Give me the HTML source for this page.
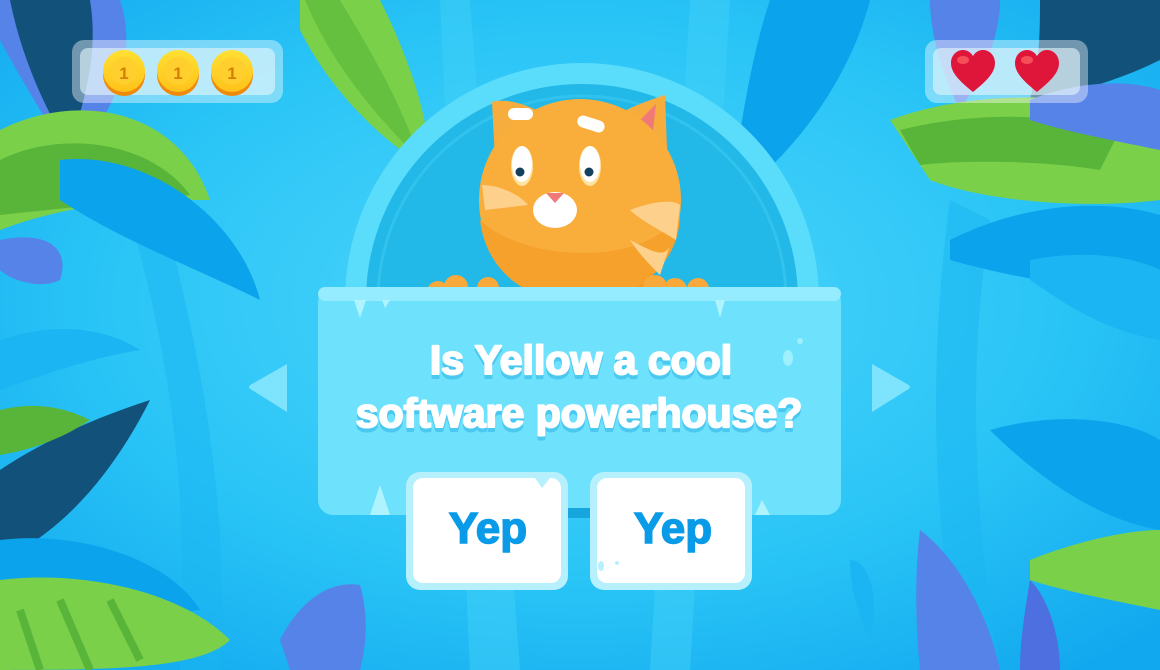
<!DOCTYPE html>
<html><head><meta charset="utf-8"><style>
html,body{margin:0;padding:0;width:1160px;height:670px;overflow:hidden;background:#27c6f5}
svg{display:block}
text{font-family:"Liberation Sans",sans-serif;font-weight:bold}
</style></head><body>
<svg width="1160" height="670" viewBox="0 0 1160 670" xmlns="http://www.w3.org/2000/svg">
<defs>
<radialGradient id="bg" cx="0.5" cy="0.45" r="0.7">
<stop offset="0" stop-color="#4fd6fb"/><stop offset="0.6" stop-color="#29c4f6"/><stop offset="1" stop-color="#12a8ef"/>
</radialGradient>
<linearGradient id="coin" x1="0" y1="0" x2="0" y2="1"><stop offset="0" stop-color="#ffe033"/><stop offset="1" stop-color="#ffc21a"/></linearGradient>
</defs>
<rect width="1160" height="670" fill="url(#bg)"/>
<path d="M440 0 L470 0 L520 670 L470 670Z" fill="#3fd0f8" opacity=".5"/>
<path d="M690 0 L730 0 L690 670 L650 670Z" fill="#3fd0f8" opacity=".5"/>
<path d="M160 200 C200 350 230 500 220 670 L180 670 C190 500 170 350 130 220Z" fill="#1ab5f2" opacity=".5"/>
<path d="M950 200 C930 350 930 500 960 670 L1000 670 C970 500 970 350 990 220Z" fill="#1ab5f2" opacity=".5"/>
<!-- leaves left -->
<path d="M0 0 L120 0 C140 60 110 120 70 160 C40 110 10 60 0 40Z" fill="#5583e8"/>
<path d="M10 0 L90 0 C100 60 80 110 70 150 C40 100 20 50 10 0Z" fill="#12527a"/>
<path d="M0 130 C80 90 180 110 210 200 C150 200 80 200 0 230Z" fill="#7bd04a"/>
<path d="M0 160 C60 130 150 140 190 195 L0 215Z" fill="#58b53a"/>
<path d="M60 160 C150 150 240 220 260 300 C200 270 120 240 60 200Z" fill="#0ba3ec"/>
<path d="M0 240 C50 230 70 250 60 280 C40 290 10 280 0 270Z" fill="#5583e8"/>
<path d="M0 340 C60 320 110 330 140 350 C80 360 30 380 0 390Z" fill="#1ab5f2"/>
<path d="M0 470 C60 430 120 410 150 400 C120 460 70 530 0 560Z" fill="#12527a"/>
<path d="M0 410 C40 400 70 410 90 420 C60 440 30 450 0 455Z" fill="#58b53a"/>
<path d="M0 540 C80 530 170 560 200 610 C130 620 60 620 0 615Z" fill="#0ba3ec"/>
<path d="M0 580 C80 570 180 590 230 640 C200 670 100 670 0 670Z" fill="#7bd04a"/>
<path d="M20 610 L40 670 M60 600 L90 670 M110 600 L140 660" stroke="#58b53a" stroke-width="8"/>
<path d="M300 0 L380 0 C410 60 430 120 430 170 C380 140 330 90 300 30Z" fill="#7bd04a"/>
<path d="M305 0 L340 0 C370 50 400 100 420 160 C370 110 330 60 305 0Z" fill="#58b53a" opacity=".6"/>
<path d="M280 640 C300 600 330 580 360 585 C370 620 365 650 360 670 L290 670Z" fill="#5583e8"/>
<!-- leaves right -->
<path d="M770 0 L870 0 C850 80 790 160 730 200 C740 130 750 60 770 0Z" fill="#0ba3ec"/>
<path d="M930 0 L1000 0 C1000 40 980 80 960 110 C940 70 930 30 930 0Z" fill="#5583e8"/>
<path d="M1040 0 L1160 0 L1160 60 C1120 80 1070 95 1030 100 C1040 60 1040 30 1040 0Z" fill="#12527a"/>
<path d="M890 120 C970 90 1080 90 1160 120 L1160 200 C1080 210 980 200 930 180Z" fill="#7bd04a"/>
<path d="M900 130 C980 110 1060 115 1120 130 L1100 170 C1040 160 960 160 920 165Z" fill="#58b53a"/>
<path d="M1030 100 C1080 80 1130 80 1160 90 L1160 150 C1110 140 1060 130 1030 120Z" fill="#5583e8"/>
<path d="M950 240 C1030 200 1110 200 1160 215 L1160 300 C1100 290 1020 280 950 260Z" fill="#0ba3ec"/>
<path d="M1030 260 C1080 250 1130 255 1160 270 L1160 340 C1100 330 1060 300 1030 280Z" fill="#1ab5f2"/>
<path d="M990 430 C1060 410 1130 420 1160 440 L1160 530 C1100 520 1040 480 990 430Z" fill="#0ba3ec"/>
<path d="M1030 560 C1080 540 1130 530 1160 530 L1160 610 C1110 600 1060 590 1030 580Z" fill="#7bd04a"/>
<path d="M920 530 C960 560 990 620 1000 670 L920 670 C915 620 915 570 920 530Z" fill="#5583e8"/>
<path d="M1030 580 C1050 600 1060 640 1060 670 L1020 670 C1020 640 1025 610 1030 580Z" fill="#4d6fe0"/>
<path d="M850 560 C870 560 880 600 870 640 C860 620 850 590 850 560Z" fill="#1ab5f2"/>
<!-- HUD panels -->
<rect x="72" y="40" width="211" height="63" rx="12" fill="#ffffff" opacity=".4"/>
<rect x="80" y="48" width="195" height="47" rx="8" fill="#e4f6fc" opacity=".6"/>
<g>
<circle cx="124" cy="75" r="21" fill="#f08a0a"/><circle cx="124" cy="71" r="21" fill="url(#coin)"/><circle cx="124" cy="71" r="14" fill="#ffcf2e"/><text x="124" y="79" font-size="17" fill="#d67f08" text-anchor="middle">1</text>
<circle cx="178" cy="75" r="21" fill="#f08a0a"/><circle cx="178" cy="71" r="21" fill="url(#coin)"/><circle cx="178" cy="71" r="14" fill="#ffcf2e"/><text x="178" y="79" font-size="17" fill="#d67f08" text-anchor="middle">1</text>
<circle cx="232" cy="75" r="21" fill="#f08a0a"/><circle cx="232" cy="71" r="21" fill="url(#coin)"/><circle cx="232" cy="71" r="14" fill="#ffcf2e"/><text x="232" y="79" font-size="17" fill="#d67f08" text-anchor="middle">1</text>
</g>
<rect x="925" y="40" width="163" height="63" rx="12" fill="#ffffff" opacity=".4"/>
<rect x="933" y="48" width="147" height="47" rx="8" fill="#e4f6fc" opacity=".6"/>
<path d="M973 92 C958 80 951 72 951 63 C951 55 957 50 963 50 C968 50 971 53 973 56 C975 53 978 50 983 50 C989 50 995 55 995 63 C995 72 988 80 973 92Z" fill="#e0153a"/>
<path d="M1037 92 C1022 80 1015 72 1015 63 C1015 55 1021 50 1027 50 C1032 50 1035 53 1037 56 C1039 53 1042 50 1047 50 C1053 50 1059 55 1059 63 C1059 72 1052 80 1037 92Z" fill="#e0153a"/>
<ellipse cx="963" cy="60" rx="6" ry="4" fill="#f66" opacity=".7"/><ellipse cx="1027" cy="60" rx="6" ry="4" fill="#f66" opacity=".7"/>
<!-- arch -->
<path d="M345 300 A237 237 0 0 1 819 300 L819 320 L345 320Z" fill="#5adcfb"/>
<path d="M366 300 A216 216 0 0 1 798 300 L798 320 L366 320Z" fill="#22b9e8"/>
<path d="M378 300 A204 204 0 0 1 786 300" fill="none" stroke="#3ccaf1" stroke-width="3" opacity=".6"/>
<!-- cat -->
<path d="M545 300 C560 270 600 265 640 275 L660 300Z" fill="#f39a1e"/>
<path d="M492 102 C505 98 525 104 540 112 L495 160Z" fill="#f7ad3d"/>
<path d="M665 95 C650 100 620 110 608 122 L668 175Z" fill="#f7ad3d"/>
<path d="M656 104 L632 128 L652 140Z" fill="#f07a78"/>
<circle cx="580" cy="200" r="101" fill="#f9ad3b"/>
<path d="M480 220 C520 260 640 270 680 215 C680 260 640 302 580 302 C520 302 485 265 480 220Z" fill="#f5a12c"/>
<path d="M482 185 C500 185 520 195 528 205 L485 210Z" fill="#fdd08c"/>
<path d="M630 210 C655 200 675 200 680 205 L676 240 C660 230 640 220 630 210Z" fill="#fdd08c"/>
<path d="M630 240 C650 250 665 260 670 245 L660 275 C650 265 640 255 630 240Z" fill="#fdd08c"/>
<rect x="508" y="108" width="25" height="12" rx="6" fill="#fff"/>
<rect x="577" y="118" width="28" height="12" rx="6" fill="#fff" transform="rotate(18 591 124)"/>
<ellipse cx="522" cy="166" rx="11" ry="20" fill="#ffe3a0"/><ellipse cx="522" cy="164" rx="10" ry="18" fill="#fff"/><circle cx="520" cy="172" r="4.5" fill="#12405e"/>
<ellipse cx="590" cy="166" rx="11" ry="20" fill="#ffe3a0"/><ellipse cx="590" cy="164" rx="10" ry="18" fill="#fff"/><circle cx="589" cy="172" r="4.5" fill="#12405e"/>
<ellipse cx="555" cy="210" rx="22" ry="18" fill="#fff"/>
<path d="M546 193 L564 193 L555 203Z" fill="#f07a78"/>
<g fill="#f8a93a"><circle cx="438" cy="292" r="11"/><circle cx="456" cy="287" r="12"/><circle cx="488" cy="288" r="11"/><circle cx="655" cy="287" r="12"/><circle cx="675" cy="290" r="12"/><circle cx="698" cy="289" r="11"/></g>
<!-- sign -->
<rect x="318" y="287" width="523" height="228" rx="15" fill="#6ee1fd"/>
<rect x="318" y="287" width="523" height="14" rx="7" fill="#95ecff"/>
<path d="M354 300 L360 318 L366 300Z M382 300 L385 308 L390 300Z M715 300 L720 318 L725 300Z" fill="#aff3ff"/>
<path d="M370 515 L380 485 L390 515Z M755 515 L762 500 L770 515Z" fill="#aff3ff"/>
<ellipse cx="788" cy="358" rx="5" ry="8" fill="#9ff0ff"/><circle cx="800" cy="341" r="3" fill="#9ff0ff"/>
<g stroke-linejoin="round">
<text x="581" y="378" font-size="41" fill="#4bc8f0" stroke="#4bc8f0" stroke-width="2" text-anchor="middle">Is Yellow a cool</text>
<text x="581" y="374" font-size="41" fill="#fff" stroke="#fff" stroke-width="2" text-anchor="middle">Is Yellow a cool</text>
<text x="579" y="431" font-size="41" fill="#4bc8f0" stroke="#4bc8f0" stroke-width="2" text-anchor="middle">software powerhouse?</text>
<text x="579" y="427" font-size="41" fill="#fff" stroke="#fff" stroke-width="2" text-anchor="middle">software powerhouse?</text>
</g>
<!-- arrows -->
<path d="M287 364 L287 412 L252 390 Q246 387 252 384Z" fill="#7ee4fd"/>
<path d="M872 364 L872 412 L907 390 Q913 387 907 384Z" fill="#7ee4fd"/>
<rect x="560" y="508" width="40" height="10" fill="#17a5de"/>
<!-- buttons -->
<rect x="406" y="472" width="162" height="118" rx="14" fill="#b6f0fd"/>
<rect x="413" y="478" width="148" height="105" rx="10" fill="#fff"/>
<rect x="590" y="472" width="162" height="118" rx="14" fill="#b6f0fd"/>
<rect x="597" y="478" width="148" height="105" rx="10" fill="#fff"/>
<path d="M535 478 L542 488 L550 478Z" fill="#b6f0fd"/>
<ellipse cx="601" cy="566" rx="3" ry="5" fill="#b6f0fd"/><circle cx="617" cy="563" r="2" fill="#b6f0fd"/>
<text x="488" y="543" font-size="44" fill="#0a9be8" stroke="#0a9be8" stroke-width="1.5" text-anchor="middle">Yep</text>
<text x="673" y="543" font-size="44" fill="#0a9be8" stroke="#0a9be8" stroke-width="1.5" text-anchor="middle">Yep</text>
</svg>
</body></html>
